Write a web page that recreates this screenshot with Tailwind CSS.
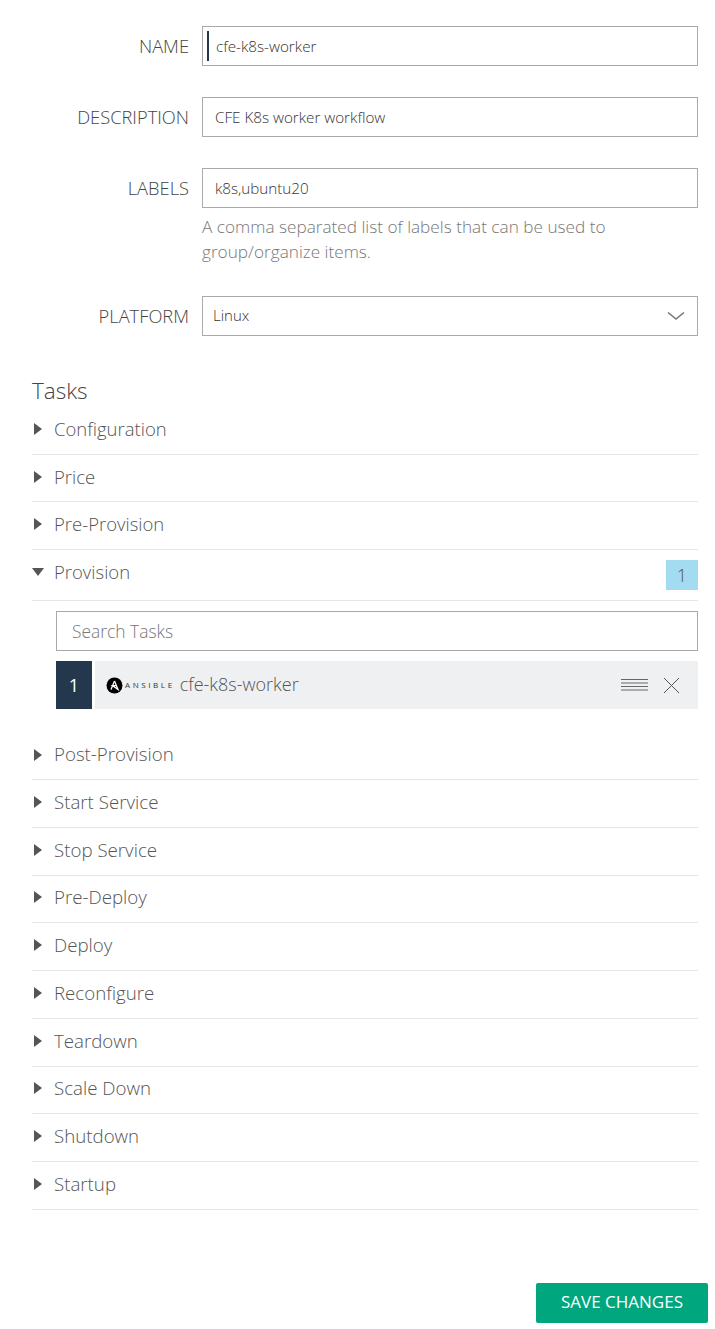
<!DOCTYPE html>
<html lang="en">
  <head>
    <meta charset="UTF-8" />
    <meta name="viewport" content="width=device-width, initial-scale=1.0" />
    <title>Edit Workflow</title>
    <script src="https://cdn.jsdelivr.net/npm/@tailwindcss/browser@4"></script>
  </head>
  <body class="bg-white text-[#555] font-['Open_Sans','Lato',sans-serif] font-light">
    <div class="w-[715px] h-[1329px] overflow-hidden relative">
      <form class="pl-[32px] pr-[17px] pt-[26px]">
        <!-- basic fields -->
        <div class="flex items-start h-[71px]">
          <label class="w-[157px] text-right text-[18.3px] leading-[40px] text-[#444]">NAME</label>
          <div class="ml-[13px] w-[496px] h-[40px] border border-[#a9a9a9] flex items-center pl-[4px]">
            <span class="w-[2px] h-[30px] bg-[#24384d]"></span>
            <span class="ml-[7px] text-[15.2px] text-[#333]">cfe-k8s-worker</span>
          </div>
        </div>
        <div class="flex items-start h-[71px]">
          <label class="w-[157px] text-right text-[18.3px] leading-[40px] text-[#444]">DESCRIPTION</label>
          <div class="ml-[13px] w-[496px] h-[40px] border border-[#a9a9a9] flex items-center pl-[12px]">
            <span class="text-[15.2px] text-[#333]">CFE K8s worker workflow</span>
          </div>
        </div>
        <div class="flex items-start h-[128px]">
          <label class="w-[157px] text-right text-[18.3px] leading-[40px] text-[#444]">LABELS</label>
          <div class="ml-[13px] w-[496px]">
            <div class="h-[40px] border border-[#a9a9a9] flex items-center pl-[12px]">
              <span class="text-[15.2px] text-[#333]">k8s,ubuntu20</span>
            </div>
            <p class="mt-[6px] text-[17.2px] leading-[25px] text-[#777]">A comma separated list of labels that can be used to<br />group/organize items.</p>
          </div>
        </div>
        <div class="flex items-start h-[40px]">
          <label class="w-[157px] text-right text-[18.3px] leading-[40px] text-[#444]">PLATFORM</label>
          <div class="ml-[13px] w-[496px] h-[40px] border border-[#a9a9a9] flex items-center justify-between pl-[10px] pr-[12px]">
            <span class="text-[15px] text-[#333] -mt-[1px]">Linux</span>
            <svg width="18" height="10" viewBox="0 0 18 10" fill="none" stroke="#777" stroke-width="1.6"><path d="M1 1.500 L9 8 L17 1.500" /></svg>
          </div>
        </div>

        <!-- tasks -->
        <h2 class="mt-[40px] text-[22.5px] leading-[30px] text-[#444]">Tasks</h2>
        <div>
          <div class="h-[49px] pb-[2px] border-b border-[#e6e6e6] flex items-center"><span class="w-0 h-0 ml-[2px] border-y-[6px] border-y-transparent border-l-[8px] border-l-[#555]"></span><span class="ml-[12px] text-[18.5px]">Configuration</span></div>
          <div class="h-[47px] pb-[3px] border-b border-[#e6e6e6] flex items-center"><span class="w-0 h-0 ml-[2px] border-y-[6px] border-y-transparent border-l-[8px] border-l-[#555]"></span><span class="ml-[12px] text-[18.5px]">Price</span></div>
          <div class="h-[48px] pb-[3px] border-b border-[#e6e6e6] flex items-center"><span class="w-0 h-0 ml-[2px] border-y-[6px] border-y-transparent border-l-[8px] border-l-[#555]"></span><span class="ml-[12px] text-[18.5px]">Pre-Provision</span></div>
          <div class="h-[51px] pb-[6px] border-b border-[#e6e6e6] flex items-center">
            <span class="w-0 h-0 border-x-[6px] border-x-transparent border-t-[8px] border-t-[#555]"></span>
            <span class="ml-[10px] text-[18.5px]">Provision</span>
            <span class="ml-auto mt-[6px] w-[32px] h-[30px] bg-[#a3dbf0] flex items-center justify-center text-[18px] text-[#555]">1</span>
          </div>
          <div class="pl-[24px] pt-[10px]">
            <div class="h-[40px] border border-[#a9a9a9] flex items-center pl-[15px] text-[17.4px] text-[#777]">Search Tasks</div>
            <div class="mt-[10px] h-[48px] flex">
              <div class="w-[36px] bg-[#24384d] text-white flex items-center justify-center text-[18px] font-normal">1</div>
              <div class="ml-[3px] flex-1 w-0 pl-[11px] pr-[18px] bg-[#eff0f2] flex items-center">
                <svg width="17" height="17" viewBox="0 0 17 17" class="shrink-0"><circle cx="8.500" cy="8.500" r="8" fill="#000" /><path d="M8.500 4 L12 12.500 L6.500 8.600 L9.800 8.600" fill="none" stroke="#fff" stroke-width="1.300" /><path d="M8.500 4 L5 12.500" stroke="#fff" stroke-width="1.300" /></svg>
                <span class="ml-[2px] text-[8px] tracking-[2.6px] font-normal text-[#333]">ANSIBLE</span>
                <span class="ml-[5px] -mt-[2px] text-[18px]">cfe-k8s-worker</span>
                <svg width="27" height="14" viewBox="0 0 27 14" class="ml-auto mr-[15px]" stroke="#666" stroke-width="1"><path d="M0 1.500H27M0 5H27M0 8.500H27M0 12H27" /></svg>
                <svg width="17" height="17" viewBox="0 0 17 17" stroke="#555" stroke-width="1"><path d="M1 1 L16 16 M16 1 L1 16" /></svg>
              </div>
            </div>
          </div>
          <div class="mt-[23px]">
            <div class="h-[48px] pb-[2px] border-b border-[#e6e6e6] flex items-center"><span class="w-0 h-0 ml-[2px] border-y-[6px] border-y-transparent border-l-[8px] border-l-[#555]"></span><span class="ml-[12px] text-[18.7px]">Post-Provision</span></div>
            <div class="h-[47.78px] pb-[3px] border-b border-[#e6e6e6] flex items-center"><span class="w-0 h-0 ml-[2px] border-y-[6px] border-y-transparent border-l-[8px] border-l-[#555]"></span><span class="ml-[12px] text-[18.7px]">Start Service</span></div>
            <div class="h-[47.78px] pb-[3px] border-b border-[#e6e6e6] flex items-center"><span class="w-0 h-0 ml-[2px] border-y-[6px] border-y-transparent border-l-[8px] border-l-[#555]"></span><span class="ml-[12px] text-[18.7px]">Stop Service</span></div>
            <div class="h-[47.78px] pb-[3px] border-b border-[#e6e6e6] flex items-center"><span class="w-0 h-0 ml-[2px] border-y-[6px] border-y-transparent border-l-[8px] border-l-[#555]"></span><span class="ml-[12px] text-[18.7px]">Pre-Deploy</span></div>
            <div class="h-[47.78px] pb-[3px] border-b border-[#e6e6e6] flex items-center"><span class="w-0 h-0 ml-[2px] border-y-[6px] border-y-transparent border-l-[8px] border-l-[#555]"></span><span class="ml-[12px] text-[18.7px]">Deploy</span></div>
            <div class="h-[47.78px] pb-[3px] border-b border-[#e6e6e6] flex items-center"><span class="w-0 h-0 ml-[2px] border-y-[6px] border-y-transparent border-l-[8px] border-l-[#555]"></span><span class="ml-[12px] text-[18.7px]">Reconfigure</span></div>
            <div class="h-[47.78px] pb-[3px] border-b border-[#e6e6e6] flex items-center"><span class="w-0 h-0 ml-[2px] border-y-[6px] border-y-transparent border-l-[8px] border-l-[#555]"></span><span class="ml-[12px] text-[18.7px]">Teardown</span></div>
            <div class="h-[47.78px] pb-[3px] border-b border-[#e6e6e6] flex items-center"><span class="w-0 h-0 ml-[2px] border-y-[6px] border-y-transparent border-l-[8px] border-l-[#555]"></span><span class="ml-[12px] text-[18.7px]">Scale Down</span></div>
            <div class="h-[47.78px] pb-[3px] border-b border-[#e6e6e6] flex items-center"><span class="w-0 h-0 ml-[2px] border-y-[6px] border-y-transparent border-l-[8px] border-l-[#555]"></span><span class="ml-[12px] text-[18.7px]">Shutdown</span></div>
            <div class="h-[47.78px] pb-[3px] border-b border-[#e6e6e6] flex items-center"><span class="w-0 h-0 ml-[2px] border-y-[6px] border-y-transparent border-l-[8px] border-l-[#555]"></span><span class="ml-[12px] text-[18.7px]">Startup</span></div>
          </div>
        </div>
      </form>
      <div class="flex justify-end pr-[7px] mt-[73px]">
        <button class="w-[172px] h-[40px] pb-[2px] rounded-[2px] bg-[#00a67e] text-white text-[17px] font-medium">SAVE CHANGES</button>
      </div>
    </div>
  </body>
</html>
